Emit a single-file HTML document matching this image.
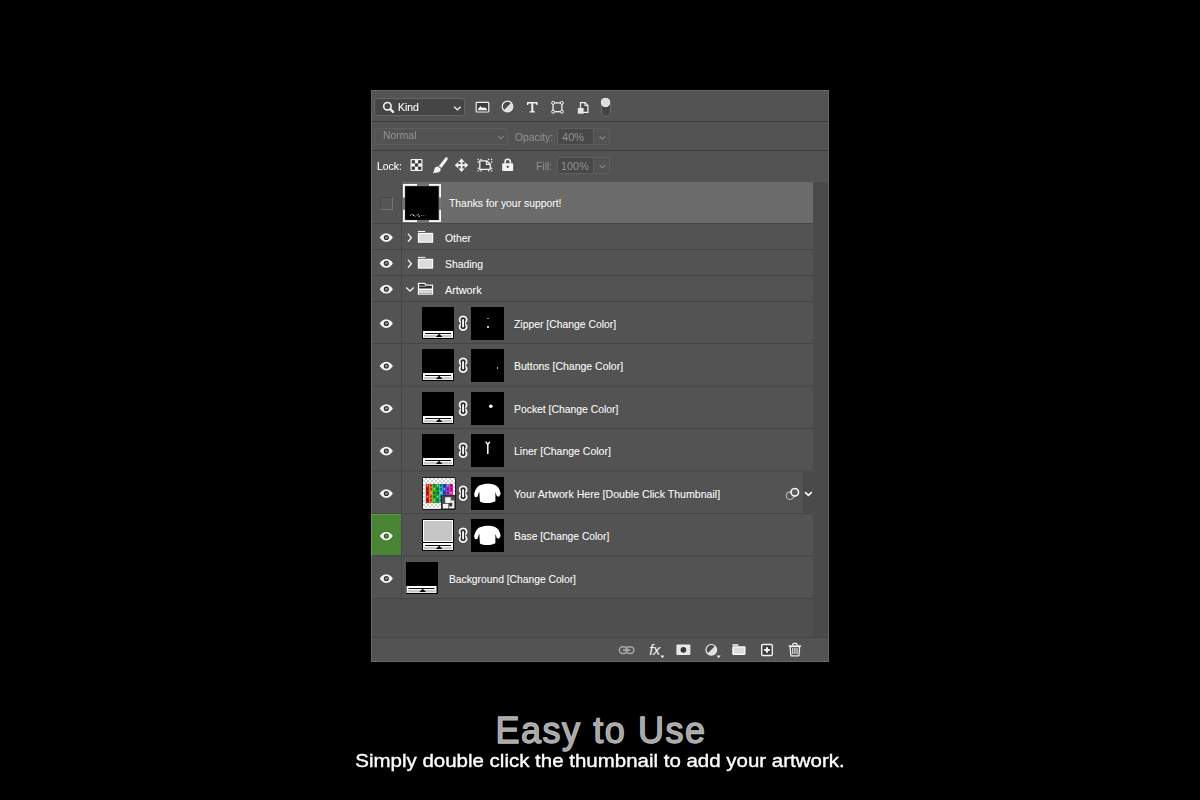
<!DOCTYPE html>
<html><head><meta charset="utf-8">
<style>
html,body{margin:0;padding:0;background:#000;}
body{width:1200px;height:800px;position:relative;overflow:hidden;font-family:"Liberation Sans",sans-serif;}
.a{position:absolute;}
#panel{left:371px;top:90px;width:458px;height:572px;background:#535353;}
.hl{position:absolute;left:372px;width:456px;height:1px;background:#3d3d3d;}
.t{position:absolute;white-space:nowrap;font-size:11.6px;line-height:14px;color:#fff;transform:scaleX(.895);transform-origin:0 50%;text-shadow:0 0 1px rgba(0,0,0,.55);-webkit-text-stroke:.15px #fff;}
.dim{color:#939393;text-shadow:none;-webkit-text-stroke:0;}
.box{position:absolute;box-sizing:border-box;border:1px solid #666;border-radius:3px;background:#454545;}
.dbox{position:absolute;box-sizing:border-box;border:1px solid #5e5e5e;border-radius:3px;background:#535353;}
.row{position:absolute;left:371px;width:442px;background:#535353;}
.rl{position:absolute;left:371px;width:442px;height:1px;background:#454545;}
svg{position:absolute;overflow:visible;}
svg.sh{filter:drop-shadow(0 0 .6px rgba(0,0,0,.75));}
#h1{position:absolute;left:1px;width:1200px;text-align:center;top:708px;font-size:36px;line-height:46px;letter-spacing:1.55px;color:#a4a4a4;-webkit-text-stroke:1.3px #b6b6b6;}
#h2{position:absolute;left:0;width:1200px;text-align:center;top:750px;font-size:18.8px;line-height:22px;color:#fff;transform:scaleX(1.09);-webkit-text-stroke:.38px #fff;}
</style></head><body>
<div id="panel" class="a"></div>
<!-- top dividers -->
<div class="hl" style="top:121px"></div>
<div class="hl" style="top:150px"></div>

<!-- row 1: filter -->
<div class="box" style="left:374px;top:98px;width:91px;height:18px;"></div>
<div class="t" style="left:397.7px;top:99.57px;">Kind</div>

<!-- row 2: blend / opacity -->
<div class="dbox" style="left:374px;top:128px;width:134px;height:17px;"></div>
<div class="t dim" style="left:382.8px;top:128.47px;">Normal</div>
<div class="t dim" style="left:515px;top:129.67px;">Opacity:</div>
<div class="dbox" style="left:557px;top:128px;width:53px;height:17px;"></div>
<div class="a" style="left:558px;top:129px;width:35px;height:15px;background:#484848;border-radius:2px 0 0 2px;"></div>
<div class="a" style="left:593px;top:129px;width:1px;height:15px;background:#5e5e5e;"></div>
<div class="t dim" style="left:561.6px;top:129.77px;transform:scaleX(.95);">40%</div>

<!-- row 3: lock / fill -->
<div class="t" style="left:376.7px;top:158.67px;">Lock:</div>
<div class="t dim" style="left:536px;top:158.77px;">Fill:</div>
<div class="dbox" style="left:557px;top:157px;width:53px;height:17px;"></div>
<div class="a" style="left:558px;top:158px;width:35px;height:15px;background:#484848;border-radius:2px 0 0 2px;"></div>
<div class="a" style="left:593px;top:158px;width:1px;height:15px;background:#5e5e5e;"></div>
<div class="t dim" style="left:561.4px;top:158.77px;transform:scaleX(.94);">100%</div>

<!-- layer list -->
<div id="list">
<div class="a" style="left:402px;top:182px;width:411px;height:41px;background:#6b6b6b;"></div>
<div class="a" style="left:371px;top:599px;width:442px;height:38px;background:#4f4f4f;"></div>
<div class="a" style="left:371px;top:514px;width:30px;height:42px;background:#5a9e3c;"></div>
<div class="a" style="left:372px;top:515px;width:29px;height:40px;background:#4a8535;"></div>
<div class="rl" style="top:223px"></div>
<div class="rl" style="top:249px"></div>
<div class="rl" style="top:275px"></div>
<div class="rl" style="top:301px"></div>
<div class="rl" style="top:343px"></div>
<div class="rl" style="top:385px;height:2px;background:#4c4c4c"></div>
<div class="rl" style="top:428px"></div>
<div class="rl" style="top:470px;height:2px;background:#4c4c4c"></div>
<div class="rl" style="top:513px"></div>
<div class="rl" style="top:555px;height:2px;background:#4c4c4c"></div>
<div class="rl" style="top:598px"></div>
<div class="a" style="left:401px;top:182px;width:1px;height:418px;background:#464646;"></div>
<div class="a" style="left:380px;top:197px;width:13px;height:13px;box-sizing:border-box;border:1px solid;border-color:#474747 #747474 #747474 #474747;background:#565656;"></div>
<svg class="sh" style="left:379px;top:233px" width="13.4" height="8.8" viewBox="0 0 13.4 8.8"><g transform="translate(0.60 0.20)"><path d="M0,4.4 C2.1,1.2 4.4,0 6.7,0 C9,0 11.3,1.2 13.4,4.4 C11.3,7.6 9,8.8 6.7,8.8 C4.4,8.8 2.1,7.6 0,4.4Z" fill="#f6f6f6"/><circle cx="6.75" cy="4.35" r="2.55" fill="#2a2a2a"/><circle cx="6.75" cy="4.35" r="1.5" fill="#7c7c7c"/><circle cx="7.1" cy="3.95" r="0.7" fill="#b0b0b0" opacity=".8"/></g></svg>
<svg class="sh" style="left:379px;top:259px" width="13.4" height="8.8" viewBox="0 0 13.4 8.8"><g transform="translate(0.60 0.00)"><path d="M0,4.4 C2.1,1.2 4.4,0 6.7,0 C9,0 11.3,1.2 13.4,4.4 C11.3,7.6 9,8.8 6.7,8.8 C4.4,8.8 2.1,7.6 0,4.4Z" fill="#f6f6f6"/><circle cx="6.75" cy="4.35" r="2.55" fill="#2a2a2a"/><circle cx="6.75" cy="4.35" r="1.5" fill="#7c7c7c"/><circle cx="7.1" cy="3.95" r="0.7" fill="#b0b0b0" opacity=".8"/></g></svg>
<svg class="sh" style="left:379px;top:284px" width="13.4" height="8.8" viewBox="0 0 13.4 8.8"><g transform="translate(0.60 0.80)"><path d="M0,4.4 C2.1,1.2 4.4,0 6.7,0 C9,0 11.3,1.2 13.4,4.4 C11.3,7.6 9,8.8 6.7,8.8 C4.4,8.8 2.1,7.6 0,4.4Z" fill="#f6f6f6"/><circle cx="6.75" cy="4.35" r="2.55" fill="#2a2a2a"/><circle cx="6.75" cy="4.35" r="1.5" fill="#7c7c7c"/><circle cx="7.1" cy="3.95" r="0.7" fill="#b0b0b0" opacity=".8"/></g></svg>
<svg class="sh" style="left:379px;top:319px" width="13.4" height="8.8" viewBox="0 0 13.4 8.8"><g transform="translate(0.60 0.20)"><path d="M0,4.4 C2.1,1.2 4.4,0 6.7,0 C9,0 11.3,1.2 13.4,4.4 C11.3,7.6 9,8.8 6.7,8.8 C4.4,8.8 2.1,7.6 0,4.4Z" fill="#f6f6f6"/><circle cx="6.75" cy="4.35" r="2.55" fill="#2a2a2a"/><circle cx="6.75" cy="4.35" r="1.5" fill="#7c7c7c"/><circle cx="7.1" cy="3.95" r="0.7" fill="#b0b0b0" opacity=".8"/></g></svg>
<svg class="sh" style="left:379px;top:361px" width="13.4" height="8.8" viewBox="0 0 13.4 8.8"><g transform="translate(0.60 0.70)"><path d="M0,4.4 C2.1,1.2 4.4,0 6.7,0 C9,0 11.3,1.2 13.4,4.4 C11.3,7.6 9,8.8 6.7,8.8 C4.4,8.8 2.1,7.6 0,4.4Z" fill="#f6f6f6"/><circle cx="6.75" cy="4.35" r="2.55" fill="#2a2a2a"/><circle cx="6.75" cy="4.35" r="1.5" fill="#7c7c7c"/><circle cx="7.1" cy="3.95" r="0.7" fill="#b0b0b0" opacity=".8"/></g></svg>
<svg class="sh" style="left:379px;top:404px" width="13.4" height="8.8" viewBox="0 0 13.4 8.8"><g transform="translate(0.60 0.20)"><path d="M0,4.4 C2.1,1.2 4.4,0 6.7,0 C9,0 11.3,1.2 13.4,4.4 C11.3,7.6 9,8.8 6.7,8.8 C4.4,8.8 2.1,7.6 0,4.4Z" fill="#f6f6f6"/><circle cx="6.75" cy="4.35" r="2.55" fill="#2a2a2a"/><circle cx="6.75" cy="4.35" r="1.5" fill="#7c7c7c"/><circle cx="7.1" cy="3.95" r="0.7" fill="#b0b0b0" opacity=".8"/></g></svg>
<svg class="sh" style="left:379px;top:446px" width="13.4" height="8.8" viewBox="0 0 13.4 8.8"><g transform="translate(0.60 0.70)"><path d="M0,4.4 C2.1,1.2 4.4,0 6.7,0 C9,0 11.3,1.2 13.4,4.4 C11.3,7.6 9,8.8 6.7,8.8 C4.4,8.8 2.1,7.6 0,4.4Z" fill="#f6f6f6"/><circle cx="6.75" cy="4.35" r="2.55" fill="#2a2a2a"/><circle cx="6.75" cy="4.35" r="1.5" fill="#7c7c7c"/><circle cx="7.1" cy="3.95" r="0.7" fill="#b0b0b0" opacity=".8"/></g></svg>
<svg class="sh" style="left:379px;top:489px" width="13.4" height="8.8" viewBox="0 0 13.4 8.8"><g transform="translate(0.60 0.20)"><path d="M0,4.4 C2.1,1.2 4.4,0 6.7,0 C9,0 11.3,1.2 13.4,4.4 C11.3,7.6 9,8.8 6.7,8.8 C4.4,8.8 2.1,7.6 0,4.4Z" fill="#f6f6f6"/><circle cx="6.75" cy="4.35" r="2.55" fill="#2a2a2a"/><circle cx="6.75" cy="4.35" r="1.5" fill="#7c7c7c"/><circle cx="7.1" cy="3.95" r="0.7" fill="#b0b0b0" opacity=".8"/></g></svg>
<svg style="left:379px;top:531px" width="13.4" height="8.8" viewBox="0 0 13.4 8.8"><g transform="translate(0.60 0.70)"><path d="M0,4.4 C2.1,1.2 4.4,0 6.7,0 C9,0 11.3,1.2 13.4,4.4 C11.3,7.6 9,8.8 6.7,8.8 C4.4,8.8 2.1,7.6 0,4.4Z" fill="#f6f6f6" stroke="#2a6a1c" stroke-width="1.3" paint-order="stroke"/><circle cx="6.75" cy="4.35" r="2.55" fill="#1f6412"/><circle cx="6.75" cy="4.35" r="1.5" fill="#4a8a35"/><circle cx="7.1" cy="3.95" r="0.7" fill="#b0b0b0" opacity=".8"/></g></svg>
<svg class="sh" style="left:379px;top:574px" width="13.4" height="8.8" viewBox="0 0 13.4 8.8"><g transform="translate(0.60 0.20)"><path d="M0,4.4 C2.1,1.2 4.4,0 6.7,0 C9,0 11.3,1.2 13.4,4.4 C11.3,7.6 9,8.8 6.7,8.8 C4.4,8.8 2.1,7.6 0,4.4Z" fill="#f6f6f6"/><circle cx="6.75" cy="4.35" r="2.55" fill="#2a2a2a"/><circle cx="6.75" cy="4.35" r="1.5" fill="#7c7c7c"/><circle cx="7.1" cy="3.95" r="0.7" fill="#b0b0b0" opacity=".8"/></g></svg>
<svg style="left:403px;top:184px" width="38" height="38" viewBox="0 0 38 38"><rect x="0.9" y="0.9" width="36.2" height="36.2" fill="none" stroke="#787878" stroke-width="1.2"/><g fill="none" stroke="#fff" stroke-width="1.7"><path d="M0.9,13.4 V0.9 H14"/><path d="M26,0.9 H37.1 V13.4"/><path d="M37.1,25.8 V37.1 H26"/><path d="M14,37.1 H0.9 V25.8"/></g><rect x="2.2" y="2.3" width="33.3" height="33.6" fill="#000"/><g fill="#d8d8d8"><rect x="7.2" y="30.6" width="1" height="1.4" opacity=".7"/><rect x="8.6" y="30" width="1.2" height="1" opacity=".9"/><rect x="10" y="30.8" width="1.4" height="1.2"/><rect x="11.8" y="31.8" width=".9" height="1" opacity=".7"/><rect x="13.6" y="30.6" width="1" height="1.2" opacity=".8"/><rect x="14.8" y="30" width="1" height="1" opacity=".8"/><rect x="15.6" y="31.6" width="1.2" height="1.4" opacity=".9"/><rect x="18" y="31" width="1" height="1" opacity=".5"/><rect x="20" y="31" width="1" height="1" opacity=".4"/><rect x="22" y="31" width="1" height="1" opacity=".3"/></g></svg>
<div class="t" style="left:448.9px;top:195px;transform:translateY(0.97px) scaleX(0.895);">Thanks for your support!</div>
<svg class="sh" style="left:407px;top:233px" width="5" height="9" viewBox="0 0 5 9"><g transform="translate(0.20 0.20)"><path d="M0.7,0.4 L4.2,4.5 L0.7,8.6" fill="none" stroke="#f6f6f6" stroke-width="1.45"/></g></svg>
<svg class="sh" style="left:417px;top:230px" width="16" height="12.6" viewBox="0 0 16 12.6"><g transform="translate(0.60 0.50)"><rect x="0.2" y="0.4" width="7.5" height="1.1" fill="#fbfbfb"/><rect x="0.8" y="2.9" width="14.2" height="8.8" fill="#dcdcdc" stroke="#fbfbfb" stroke-width="1.25"/></g></svg>
<div class="t" style="left:445.2px;top:231px;transform:translateY(0.02px) scaleX(0.895);">Other</div>
<svg class="sh" style="left:407px;top:259px" width="5" height="9" viewBox="0 0 5 9"><g transform="translate(0.20 0.20)"><path d="M0.7,0.4 L4.2,4.5 L0.7,8.6" fill="none" stroke="#f6f6f6" stroke-width="1.45"/></g></svg>
<svg class="sh" style="left:417px;top:256px" width="16" height="12.6" viewBox="0 0 16 12.6"><g transform="translate(0.60 0.40)"><rect x="0.2" y="0.4" width="7.5" height="1.1" fill="#fbfbfb"/><rect x="0.8" y="2.9" width="14.2" height="8.8" fill="#dcdcdc" stroke="#fbfbfb" stroke-width="1.25"/></g></svg>
<div class="t" style="left:445.2px;top:256px;transform:translateY(0.77px) scaleX(0.895);">Shading</div>
<svg style="left:405px;top:287px" width="8.4" height="4.6" viewBox="0 0 8.4 4.6"><g transform="translate(0.80 0.00)"><path d="M0.4,0.5 L4.2,3.9999999999999996 L8.0,0.5" fill="none" stroke="#f0f0f0" stroke-width="1.3"/></g></svg>
<svg class="sh" style="left:417px;top:282px" width="16" height="12.6" viewBox="0 0 16 12.6"><g transform="translate(0.60 0.50)"><path d="M0.85,0.85 H7.3 L8.3,2.65 H14.95 V11.6 H0.85Z" fill="#2c2c2c" stroke="#fbfbfb" stroke-width="1.3"/><path d="M0.85,3.65 H8.3" stroke="#dedede" stroke-width=".75"/><rect x="0.85" y="6" width="14.1" height="1.6" fill="#fbfbfb"/><rect x="1.5" y="7.6" width="12.8" height="3.3" fill="#dadada"/></g></svg>
<div class="t" style="left:445.2px;top:282px;transform:translateY(0.67px) scaleX(0.93);">Artwork</div>
<div class="a" style="left:422px;top:307px;width:32px;height:32px;background:#000;border-radius:0 0 1px 1px;"></div><div class="a" style="left:422px;top:307px;width:32px;height:24px;background:#000;"></div><svg style="left:423px;top:331px" width="30" height="7" viewBox="0 0 30 7"><rect x="0" y="0" width="30" height="7" fill="#fdfdfd"/><rect x="1" y="4" width="28" height="2.4" fill="#c8c8c8"/><rect x="2" y="2" width="26" height="1" fill="#0c0c0c"/><path d="M12.9,6 L16.2,2.7 L19.5,6Z" fill="#000"/></svg>
<svg style="left:458px;top:315px" width="9.1" height="15.7" viewBox="0 0 9.1 15.7"><g transform="translate(0.60 0.40)"><ellipse cx="4.5" cy="4.25" rx="3.55" ry="3.3" fill="none" stroke="#2e2e2e" stroke-width="2.9" opacity=".55"/><ellipse cx="4.5" cy="11.45" rx="3.55" ry="3.3" fill="none" stroke="#2e2e2e" stroke-width="2.9" opacity=".55"/><ellipse cx="4.5" cy="4.25" rx="3.55" ry="3.3" fill="none" stroke="#f6f6f6" stroke-width="1.9"/><ellipse cx="4.5" cy="11.45" rx="3.55" ry="3.3" fill="none" stroke="#f6f6f6" stroke-width="1.9"/><rect x="2.5" y="2.7" width="4" height="10.3" rx="2" fill="#1c1c1c"/><rect x="3.5" y="3.6" width="2" height="8.5" rx="1" fill="#f2f2f2"/></g></svg>
<div class="a" style="left:471px;top:307px;width:33px;height:33px;background:#000;"></div><div class="a" style="left:487px;top:318px;width:2px;height:1px;background:#8a8a8a;"></div><div class="a" style="left:487px;top:326px;width:2px;height:2px;background:#c8c8c8;"></div>
<div class="t" style="left:513.6px;top:317px;transform:translateY(0.12px) scaleX(0.895);">Zipper [Change Color]</div>
<div class="a" style="left:422px;top:349px;width:32px;height:32px;background:#000;border-radius:0 0 1px 1px;"></div><div class="a" style="left:422px;top:349px;width:32px;height:24px;background:#000;"></div><svg style="left:423px;top:373px" width="30" height="7" viewBox="0 0 30 7"><rect x="0" y="0" width="30" height="7" fill="#fdfdfd"/><rect x="1" y="4" width="28" height="2.4" fill="#c8c8c8"/><rect x="2" y="2" width="26" height="1" fill="#0c0c0c"/><path d="M12.9,6 L16.2,2.7 L19.5,6Z" fill="#000"/></svg>
<svg style="left:458px;top:357px" width="9.1" height="15.7" viewBox="0 0 9.1 15.7"><g transform="translate(0.60 0.40)"><ellipse cx="4.5" cy="4.25" rx="3.55" ry="3.3" fill="none" stroke="#2e2e2e" stroke-width="2.9" opacity=".55"/><ellipse cx="4.5" cy="11.45" rx="3.55" ry="3.3" fill="none" stroke="#2e2e2e" stroke-width="2.9" opacity=".55"/><ellipse cx="4.5" cy="4.25" rx="3.55" ry="3.3" fill="none" stroke="#f6f6f6" stroke-width="1.9"/><ellipse cx="4.5" cy="11.45" rx="3.55" ry="3.3" fill="none" stroke="#f6f6f6" stroke-width="1.9"/><rect x="2.5" y="2.7" width="4" height="10.3" rx="2" fill="#1c1c1c"/><rect x="3.5" y="3.6" width="2" height="8.5" rx="1" fill="#f2f2f2"/></g></svg>
<div class="a" style="left:471px;top:349px;width:33px;height:33px;background:#000;"></div><div class="a" style="left:497px;top:367px;width:1px;height:2px;background:#b0b0b0;"></div>
<div class="t" style="left:513.9px;top:359px;transform:translateY(0.07px) scaleX(0.905);">Buttons [Change Color]</div>
<div class="a" style="left:422px;top:392px;width:32px;height:32px;background:#000;border-radius:0 0 1px 1px;"></div><div class="a" style="left:422px;top:392px;width:32px;height:24px;background:#000;"></div><svg style="left:423px;top:416px" width="30" height="7" viewBox="0 0 30 7"><rect x="0" y="0" width="30" height="7" fill="#fdfdfd"/><rect x="1" y="4" width="28" height="2.4" fill="#c8c8c8"/><rect x="2" y="2" width="26" height="1" fill="#0c0c0c"/><path d="M12.9,6 L16.2,2.7 L19.5,6Z" fill="#000"/></svg>
<svg style="left:458px;top:400px" width="9.1" height="15.7" viewBox="0 0 9.1 15.7"><g transform="translate(0.60 0.40)"><ellipse cx="4.5" cy="4.25" rx="3.55" ry="3.3" fill="none" stroke="#2e2e2e" stroke-width="2.9" opacity=".55"/><ellipse cx="4.5" cy="11.45" rx="3.55" ry="3.3" fill="none" stroke="#2e2e2e" stroke-width="2.9" opacity=".55"/><ellipse cx="4.5" cy="4.25" rx="3.55" ry="3.3" fill="none" stroke="#f6f6f6" stroke-width="1.9"/><ellipse cx="4.5" cy="11.45" rx="3.55" ry="3.3" fill="none" stroke="#f6f6f6" stroke-width="1.9"/><rect x="2.5" y="2.7" width="4" height="10.3" rx="2" fill="#1c1c1c"/><rect x="3.5" y="3.6" width="2" height="8.5" rx="1" fill="#f2f2f2"/></g></svg>
<div class="a" style="left:471px;top:392px;width:33px;height:33px;background:#000;"></div><svg style="left:488px;top:404px" width="4" height="4" viewBox="0 0 4 4"><g transform="translate(0.80 0.30)"><circle cx="2" cy="2" r="1.8" fill="#fff"/></g></svg>
<div class="t" style="left:513.9px;top:401px;transform:translateY(0.67px) scaleX(0.895);">Pocket [Change Color]</div>
<div class="a" style="left:422px;top:434px;width:32px;height:32px;background:#000;border-radius:0 0 1px 1px;"></div><div class="a" style="left:422px;top:434px;width:32px;height:24px;background:#000;"></div><svg style="left:423px;top:458px" width="30" height="7" viewBox="0 0 30 7"><rect x="0" y="0" width="30" height="7" fill="#fdfdfd"/><rect x="1" y="4" width="28" height="2.4" fill="#c8c8c8"/><rect x="2" y="2" width="26" height="1" fill="#0c0c0c"/><path d="M12.9,6 L16.2,2.7 L19.5,6Z" fill="#000"/></svg>
<svg style="left:458px;top:442px" width="9.1" height="15.7" viewBox="0 0 9.1 15.7"><g transform="translate(0.60 0.40)"><ellipse cx="4.5" cy="4.25" rx="3.55" ry="3.3" fill="none" stroke="#2e2e2e" stroke-width="2.9" opacity=".55"/><ellipse cx="4.5" cy="11.45" rx="3.55" ry="3.3" fill="none" stroke="#2e2e2e" stroke-width="2.9" opacity=".55"/><ellipse cx="4.5" cy="4.25" rx="3.55" ry="3.3" fill="none" stroke="#f6f6f6" stroke-width="1.9"/><ellipse cx="4.5" cy="11.45" rx="3.55" ry="3.3" fill="none" stroke="#f6f6f6" stroke-width="1.9"/><rect x="2.5" y="2.7" width="4" height="10.3" rx="2" fill="#1c1c1c"/><rect x="3.5" y="3.6" width="2" height="8.5" rx="1" fill="#f2f2f2"/></g></svg>
<div class="a" style="left:471px;top:434px;width:33px;height:33px;background:#000;"></div><svg style="left:484px;top:441px" width="6" height="13" viewBox="0 0 6 13"><g transform="translate(0.80 0.30)"><path d="M0.2,0.4 L1.6,0.2 L3,1.9 L4.4,0.2 L5.8,0.4 L3.75,3.4 L3.75,12.8 L2.25,12.8 L2.25,3.4Z" fill="#fff"/></g></svg>
<div class="t" style="left:513.9px;top:444px;transform:translateY(0.07px) scaleX(0.905);">Liner [Change Color]</div>
<div class="a" style="left:422px;top:477px;width:34px;height:33px;background:#1e1e1e;border-radius:1.5px;"></div>
<div class="a" style="left:423px;top:478px;width:32px;height:31px;background-color:#fff;background-image:linear-gradient(45deg,#d2d2d2 25%,transparent 25%,transparent 75%,#d2d2d2 75%),linear-gradient(45deg,#d2d2d2 25%,transparent 25%,transparent 75%,#d2d2d2 75%);background-size:4px 4px;background-position:0 0,2px 2px;"></div>
<svg style="left:425px;top:484px" width="27.2" height="19" viewBox="0 0 27.2 19"><g transform="translate(0.80 0.00)"><rect x="0.00" y="0" width="3.45" height="19" fill="#d81414"/><rect x="3.39" y="0" width="3.45" height="19" fill="#cf7d14"/><rect x="6.78" y="0" width="3.45" height="19" fill="#2cae22"/><rect x="10.17" y="0" width="3.45" height="19" fill="#14a040"/><rect x="13.56" y="0" width="3.45" height="19" fill="#12aeb0"/><rect x="16.95" y="0" width="3.45" height="19" fill="#3344d0"/><rect x="20.34" y="0" width="3.45" height="19" fill="#9030c0"/><rect x="23.73" y="0" width="3.45" height="19" fill="#e012a0"/><rect x="1.00" y="0.60" width="1.4" height="1.7" fill="#e8e8e8" opacity=".7"/><rect x="1.00" y="4.30" width="1.4" height="1.7" fill="#151515" opacity=".7"/><rect x="1.00" y="8.00" width="1.4" height="1.7" fill="#151515" opacity=".7"/><rect x="1.00" y="11.70" width="1.4" height="1.7" fill="#e8e8e8" opacity=".7"/><rect x="1.00" y="15.40" width="1.4" height="1.7" fill="#151515" opacity=".7"/><rect x="4.39" y="0.60" width="1.4" height="1.7" fill="#151515" opacity=".7"/><rect x="4.39" y="4.30" width="1.4" height="1.7" fill="#151515" opacity=".7"/><rect x="4.39" y="8.00" width="1.4" height="1.7" fill="#e8e8e8" opacity=".7"/><rect x="4.39" y="11.70" width="1.4" height="1.7" fill="#151515" opacity=".7"/><rect x="4.39" y="15.40" width="1.4" height="1.7" fill="#151515" opacity=".7"/><rect x="7.78" y="0.60" width="1.4" height="1.7" fill="#151515" opacity=".7"/><rect x="7.78" y="4.30" width="1.4" height="1.7" fill="#e8e8e8" opacity=".7"/><rect x="7.78" y="8.00" width="1.4" height="1.7" fill="#151515" opacity=".7"/><rect x="7.78" y="11.70" width="1.4" height="1.7" fill="#151515" opacity=".7"/><rect x="7.78" y="15.40" width="1.4" height="1.7" fill="#e8e8e8" opacity=".7"/><rect x="11.17" y="0.60" width="1.4" height="1.7" fill="#e8e8e8" opacity=".7"/><rect x="11.17" y="4.30" width="1.4" height="1.7" fill="#151515" opacity=".7"/><rect x="11.17" y="8.00" width="1.4" height="1.7" fill="#151515" opacity=".7"/><rect x="11.17" y="11.70" width="1.4" height="1.7" fill="#e8e8e8" opacity=".7"/><rect x="11.17" y="15.40" width="1.4" height="1.7" fill="#151515" opacity=".7"/><rect x="14.56" y="0.60" width="1.4" height="1.7" fill="#151515" opacity=".7"/><rect x="14.56" y="4.30" width="1.4" height="1.7" fill="#151515" opacity=".7"/><rect x="14.56" y="8.00" width="1.4" height="1.7" fill="#e8e8e8" opacity=".7"/><rect x="14.56" y="11.70" width="1.4" height="1.7" fill="#151515" opacity=".7"/><rect x="14.56" y="15.40" width="1.4" height="1.7" fill="#151515" opacity=".7"/><rect x="17.95" y="0.60" width="1.4" height="1.7" fill="#151515" opacity=".7"/><rect x="17.95" y="4.30" width="1.4" height="1.7" fill="#e8e8e8" opacity=".7"/><rect x="17.95" y="8.00" width="1.4" height="1.7" fill="#151515" opacity=".7"/><rect x="17.95" y="11.70" width="1.4" height="1.7" fill="#151515" opacity=".7"/><rect x="17.95" y="15.40" width="1.4" height="1.7" fill="#e8e8e8" opacity=".7"/><rect x="21.34" y="0.60" width="1.4" height="1.7" fill="#e8e8e8" opacity=".7"/><rect x="21.34" y="4.30" width="1.4" height="1.7" fill="#151515" opacity=".7"/><rect x="21.34" y="8.00" width="1.4" height="1.7" fill="#151515" opacity=".7"/><rect x="21.34" y="11.70" width="1.4" height="1.7" fill="#e8e8e8" opacity=".7"/><rect x="21.34" y="15.40" width="1.4" height="1.7" fill="#151515" opacity=".7"/><rect x="24.73" y="0.60" width="1.4" height="1.7" fill="#151515" opacity=".7"/><rect x="24.73" y="4.30" width="1.4" height="1.7" fill="#151515" opacity=".7"/><rect x="24.73" y="8.00" width="1.4" height="1.7" fill="#e8e8e8" opacity=".7"/><rect x="24.73" y="11.70" width="1.4" height="1.7" fill="#151515" opacity=".7"/><rect x="24.73" y="15.40" width="1.4" height="1.7" fill="#151515" opacity=".7"/></g></svg>
<svg style="left:441px;top:495px" width="14" height="13.8" viewBox="0 0 14 13.8"><g transform="translate(0.00 0.20)"><rect width="14" height="13.8" fill="#4a4a4a"/><path d="M0.5,13.8 V0.5 H14" fill="none" stroke="#2a2a2a" stroke-width="1"/><path d="M4.2,2 H9.6 L13.2,5.6 V13 H4.2Z" fill="#f4f4f4"/><path d="M9.6,2 L13.2,5.6 H9.6Z" fill="#3a3a3a"/><path d="M9.6,2.4 V5.6 H12.8" fill="none" stroke="#dcdcdc" stroke-width=".7"/><rect x="8.2" y="7.6" width="3" height="3.6" fill="#333"/><rect x="1.2" y="7.9" width="7" height="5.6" fill="#333"/><rect x="1.8" y="8.6" width="5.6" height="4.6" fill="#f4f4f4"/></g></svg>
<svg style="left:458px;top:485px" width="9.1" height="15.7" viewBox="0 0 9.1 15.7"><g transform="translate(0.60 0.40)"><ellipse cx="4.5" cy="4.25" rx="3.55" ry="3.3" fill="none" stroke="#2e2e2e" stroke-width="2.9" opacity=".55"/><ellipse cx="4.5" cy="11.45" rx="3.55" ry="3.3" fill="none" stroke="#2e2e2e" stroke-width="2.9" opacity=".55"/><ellipse cx="4.5" cy="4.25" rx="3.55" ry="3.3" fill="none" stroke="#f6f6f6" stroke-width="1.9"/><ellipse cx="4.5" cy="11.45" rx="3.55" ry="3.3" fill="none" stroke="#f6f6f6" stroke-width="1.9"/><rect x="2.5" y="2.7" width="4" height="10.3" rx="2" fill="#1c1c1c"/><rect x="3.5" y="3.6" width="2" height="8.5" rx="1" fill="#f2f2f2"/></g></svg>
<div class="a" style="left:471px;top:477px;width:33px;height:33px;background:#000;"></div><svg style="left:471px;top:477px" width="33" height="33" viewBox="0 0 33 33"><path d="M13.4,7 C15,6.6 18.8,6.6 20.4,7 C22,7.2 23.6,7.8 24.9,8.5 C26.4,9.3 27.4,10.4 27.9,11.5 C28.6,13 29.3,14.8 29.65,16.5 C29.4,17.7 28.6,18.9 27.9,19.75 L25.65,19 C25.4,17.6 25,16.2 24.4,15 L24.4,24.25 C22,25.6 18.8,26 15.9,26 C13.4,26 10.8,25.6 8.9,24.5 L8.3,14.5 C7.6,16 7,18 6.65,19.75 L4.15,20.25 C3.6,19.2 3.2,18.2 3.15,17 C3.3,16 3.5,15.2 3.9,14.5 C4.6,12.6 5.6,10.8 6.9,9.5 C8.6,8.2 11,7.4 13.4,7Z" fill="#fff"/></svg>
<div class="t" style="left:513.5px;top:486px;transform:translateY(0.82px) scaleX(0.914);">Your Artwork Here [Double Click Thumbnail]</div>
<div class="a" style="left:803px;top:472px;width:10px;height:41px;background:#4a4a4a;"></div>
<svg class="sh" style="left:785px;top:487px" width="16" height="14" viewBox="0 0 16 14"><circle cx="5" cy="8.7" r="3.7" fill="none" stroke="#b4b4b4" stroke-width="1.4"/><circle cx="9.8" cy="5.3" r="3.8" fill="#5e5e5e" stroke="#fafafa" stroke-width="1.6"/></svg>
<svg style="left:804px;top:491px" width="7.6" height="4.4" viewBox="0 0 7.6 4.4"><g transform="translate(0.60 0.60)"><path d="M0.4,0.5 L3.8,3.8000000000000003 L7.199999999999999,0.5" fill="none" stroke="#fff" stroke-width="1.5"/></g></svg>
<div class="a" style="left:422px;top:519px;width:32px;height:32px;background:#000;border-radius:0 0 1px 1px;"></div><div class="a" style="left:423px;top:520px;width:30px;height:22px;background:#fff;"></div><div class="a" style="left:424px;top:521px;width:28px;height:20px;background:#c6c6c6;"></div><svg style="left:423px;top:543px" width="30" height="7" viewBox="0 0 30 7"><rect x="0" y="0" width="30" height="7" fill="#fdfdfd"/><rect x="1" y="4" width="28" height="2.4" fill="#c8c8c8"/><rect x="2" y="2" width="26" height="1" fill="#0c0c0c"/><path d="M12.9,6 L16.2,2.7 L19.5,6Z" fill="#000"/></svg>
<svg style="left:458px;top:527px" width="9.1" height="15.7" viewBox="0 0 9.1 15.7"><g transform="translate(0.60 0.40)"><ellipse cx="4.5" cy="4.25" rx="3.55" ry="3.3" fill="none" stroke="#2e2e2e" stroke-width="2.9" opacity=".55"/><ellipse cx="4.5" cy="11.45" rx="3.55" ry="3.3" fill="none" stroke="#2e2e2e" stroke-width="2.9" opacity=".55"/><ellipse cx="4.5" cy="4.25" rx="3.55" ry="3.3" fill="none" stroke="#f6f6f6" stroke-width="1.9"/><ellipse cx="4.5" cy="11.45" rx="3.55" ry="3.3" fill="none" stroke="#f6f6f6" stroke-width="1.9"/><rect x="2.5" y="2.7" width="4" height="10.3" rx="2" fill="#1c1c1c"/><rect x="3.5" y="3.6" width="2" height="8.5" rx="1" fill="#f2f2f2"/></g></svg>
<div class="a" style="left:471px;top:519px;width:33px;height:33px;background:#000;"></div><svg style="left:471px;top:519px" width="33" height="33" viewBox="0 0 33 33"><path d="M13.4,7 C15,6.6 18.8,6.6 20.4,7 C22,7.2 23.6,7.8 24.9,8.5 C26.4,9.3 27.4,10.4 27.9,11.5 C28.6,13 29.3,14.8 29.65,16.5 C29.4,17.7 28.6,18.9 27.9,19.75 L25.65,19 C25.4,17.6 25,16.2 24.4,15 L24.4,24.25 C22,25.6 18.8,26 15.9,26 C13.4,26 10.8,25.6 8.9,24.5 L8.3,14.5 C7.6,16 7,18 6.65,19.75 L4.15,20.25 C3.6,19.2 3.2,18.2 3.15,17 C3.3,16 3.5,15.2 3.9,14.5 C4.6,12.6 5.6,10.8 6.9,9.5 C8.6,8.2 11,7.4 13.4,7Z" fill="#fff"/></svg>
<div class="t" style="left:513.9px;top:529px;transform:translateY(0.32px) scaleX(0.885);">Base [Change Color]</div>
<div class="a" style="left:405.5px;top:562px;width:32px;height:32px;background:#000;border-radius:0 0 1px 1px;"></div><div class="a" style="left:405.5px;top:562px;width:32px;height:24px;background:#000;"></div><svg style="left:406px;top:586px" width="30" height="7" viewBox="0 0 30 7"><g transform="translate(0.50 0.00)"><rect x="0" y="0" width="30" height="7" fill="#fdfdfd"/><rect x="1" y="4" width="28" height="2.4" fill="#c8c8c8"/><rect x="2" y="2" width="26" height="1" fill="#0c0c0c"/><path d="M12.9,6 L16.2,2.7 L19.5,6Z" fill="#000"/></g></svg>
<div class="t" style="left:448.6px;top:571px;transform:translateY(0.82px) scaleX(0.887);">Background [Change Color]</div>
</div><!--endlist-->

<!-- scrollbar -->
<div class="a" style="left:813px;top:182px;width:16px;height:455px;background:#4a4a4a;"></div>
<!-- bottom bar -->
<div class="a" style="left:371px;top:637px;width:458px;height:1px;background:#454545;"></div>

<div id="icons">
<svg style="left:382px;top:101px" width="12" height="12" viewBox="0 0 12 12"><g transform="translate(0.50 0.30)"><circle cx="4.9" cy="4.9" r="3.7" fill="none" stroke="#f2f2f2" stroke-width="1.6"/><path d="M7.9,7.9 L10.6,10.6" stroke="#f2f2f2" stroke-width="2.3" stroke-linecap="round"/></g></svg>
<svg style="left:453px;top:106px" width="7.2" height="4.2" viewBox="0 0 7.2 4.2"><g transform="translate(0.80 0.30)"><path d="M0.4,0.5 L3.6,3.6 L6.8,0.5" fill="none" stroke="#f2f2f2" stroke-width="1.4"/></g></svg>
<svg style="left:475px;top:101px" width="14" height="11" viewBox="0 0 14 11"><g transform="translate(0.50 0.70)"><rect x="0.7" y="0.7" width="12.6" height="9.6" rx="0.8" fill="#3c3c3c" stroke="#f2f2f2" stroke-width="1.2"/><path d="M2.4,8.6 L2.4,7.6 L4.9,4.2 L6.6,6.4 L7.4,5.4 L8.4,6.6 L9.4,5.2 L11.6,7.8 L11.6,8.6Z" fill="#f2f2f2"/></g></svg>
<svg style="left:501px;top:100px" width="13" height="13" viewBox="0 0 13 13"><circle cx="6.5" cy="6.5" r="5.3" fill="#4a4a4a" stroke="#f2f2f2" stroke-width="1.2"/><path d="M10.25,2.75 A5.3,5.3 0 0 1 2.75,10.25Z" fill="#e0e0e0"/></svg>
<svg style="left:526px;top:102px" width="11" height="10.6" viewBox="0 0 11 10.6"><g transform="translate(0.80 0.00)"><path d="M0.2,0 H10.8 V3 H9.6 L9.2,1.4 H6.5 V9 L8.2,9.4 V10.6 H2.8 V9.4 L4.5,9 V1.4 H1.8 L1.4,3 H0.2Z" fill="#f2f2f2"/></g></svg>
<svg style="left:551px;top:101px" width="12.4" height="12" viewBox="0 0 12.4 12"><g transform="translate(0.30 0.30)"><rect x="1.8" y="1.6" width="8.8" height="8.8" fill="none" stroke="#f2f2f2" stroke-width="1.3"/><circle cx="1.8" cy="1.6" r="1.5" fill="#535353" stroke="#f2f2f2" stroke-width="1"/><circle cx="1.8" cy="10.4" r="1.5" fill="#535353" stroke="#f2f2f2" stroke-width="1"/><circle cx="10.6" cy="1.6" r="1.5" fill="#535353" stroke="#f2f2f2" stroke-width="1"/><circle cx="10.6" cy="10.4" r="1.5" fill="#535353" stroke="#f2f2f2" stroke-width="1"/></g></svg>
<svg style="left:577px;top:102px" width="11" height="12" viewBox="0 0 11 12"><g transform="translate(0.50 0.00)"><path d="M3,0.6 H7.6 L10.4,3.4 V10.4 H3Z" fill="#4a4a4a" stroke="#f2f2f2" stroke-width="1.2"/><path d="M7.4,0.6 V3.6 H10.4" fill="none" stroke="#f2f2f2" stroke-width="1"/><rect x="0.3" y="6" width="5.8" height="5.7" fill="#e6e6e6"/></g></svg>
<div class="a" style="left:601px;top:98px;width:10px;height:19px;box-sizing:border-box;border:1px solid #6c6c6c;border-radius:5px;background:#434343;"></div>
<div class="a" style="left:601.3px;top:98.2px;width:9.2px;height:9.2px;border-radius:5px;background:#dedede;box-shadow:0 0 0 .6px #fff inset;"></div>
<svg style="left:497px;top:135px" width="6.4" height="3.8" viewBox="0 0 6.4 3.8"><g transform="translate(0.60 0.60)"><path d="M0.4,0.5 L3.2,3.1999999999999997 L6.0,0.5" fill="none" stroke="#8a8a8a" stroke-width="1.1"/></g></svg>
<svg style="left:599px;top:135px" width="6.4" height="3.8" viewBox="0 0 6.4 3.8"><g transform="translate(0.20 0.80)"><path d="M0.4,0.5 L3.2,3.1999999999999997 L6.0,0.5" fill="none" stroke="#8a8a8a" stroke-width="1.1"/></g></svg>
<svg style="left:599px;top:164px" width="6.4" height="3.8" viewBox="0 0 6.4 3.8"><g transform="translate(0.20 0.60)"><path d="M0.4,0.5 L3.2,3.1999999999999997 L6.0,0.5" fill="none" stroke="#8a8a8a" stroke-width="1.1"/></g></svg>
<svg style="left:410px;top:159px" width="12" height="12" viewBox="0 0 12 12"><g transform="translate(0.50 0.00)"><rect x="0" y="0" width="12" height="12" rx="0.8" fill="#f2f2f2"/><rect x="1.2" y="1.2" width="3.2" height="3.2" fill="#3a3a3a"/><rect x="1.2" y="7.6" width="3.2" height="3.2" fill="#3a3a3a"/><rect x="4.4" y="4.4" width="3.2" height="3.2" fill="#3a3a3a"/><rect x="7.6" y="1.2" width="3.2" height="3.2" fill="#3a3a3a"/><rect x="7.6" y="7.6" width="3.2" height="3.2" fill="#3a3a3a"/></g></svg>
<svg style="left:432px;top:157px" width="15.4" height="16.6" viewBox="0 0 15.4 16.6"><g transform="translate(0.60 0.00)"><path d="M14.4,0.3 C15.4,1 15.2,2.2 14.4,3.4 L8.8,11 L6.2,8.9 L12.2,1.4 C12.9,0.5 13.7,-0.1 14.4,0.3Z" fill="#f2f2f2"/><path d="M5.5,9.6 L8.1,11.7 C8.5,13.4 7.2,15 5.2,15.5 C3.4,15.9 1.6,15.8 0.3,16.4 C1.5,14.8 1.3,13.2 2,11.6 C2.7,10 4.3,9.2 5.5,9.6Z" fill="#f2f2f2"/></g></svg>
<svg style="left:454px;top:158px" width="13.6" height="13.6" viewBox="0 0 13.6 13.6"><g transform="translate(0.70 0.40)"><path d="M6.8,0 L9.9,3.6 H7.7 V5.9 H10 V3.7 L13.6,6.8 L10,9.9 V7.7 H7.7 V10 H9.9 L6.8,13.6 L3.7,10 H5.9 V7.7 H3.6 V9.9 L0,6.8 L3.6,3.7 V5.9 H5.9 V3.6 H3.7Z" fill="#f2f2f2"/></g></svg>
<svg style="left:477px;top:158px" width="15" height="13" viewBox="0 0 15 13"><g transform="translate(0.60 0.80)"><rect x="0" y="0" width="1.3" height="1.3" fill="#f2f2f2"/><rect x="0" y="2.6" width="1.3" height="1.3" fill="#f2f2f2"/><rect x="2.8" y="0" width="1.3" height="1.3" fill="#f2f2f2"/><rect x="10.4" y="0" width="1.3" height="1.3" fill="#f2f2f2"/><rect x="13.4" y="0" width="1.3" height="1.3" fill="#f2f2f2"/><rect x="13.4" y="2.6" width="1.3" height="1.3" fill="#f2f2f2"/><rect x="0" y="8.8" width="1.3" height="1.3" fill="#f2f2f2"/><rect x="0" y="11.4" width="1.3" height="1.3" fill="#f2f2f2"/><rect x="2.8" y="11.4" width="1.3" height="1.3" fill="#f2f2f2"/><rect x="13.4" y="8.8" width="1.3" height="1.3" fill="#f2f2f2"/><rect x="13.4" y="11.4" width="1.3" height="1.3" fill="#f2f2f2"/><rect x="10.4" y="11.4" width="1.3" height="1.3" fill="#f2f2f2"/><path d="M2.2,2.1 H9.2 L12.6,5.2 V10.6 H2.2Z" fill="#484848" stroke="#f2f2f2" stroke-width="1.3"/><path d="M8.8,2.1 V5.6 H12.6" fill="none" stroke="#f2f2f2" stroke-width="1.1"/></g></svg>
<svg style="left:502px;top:158px" width="11.4" height="12.6" viewBox="0 0 11.4 12.6"><g transform="translate(0.00 0.60)"><path d="M3,5 V3.4 A2.7,2.7 0 0 1 8.4,3.4 V5" fill="none" stroke="#f2f2f2" stroke-width="1.5"/><rect x="0.2" y="4.6" width="11" height="7.8" rx="0.8" fill="#f2f2f2"/><circle cx="5.7" cy="8.2" r="1.1" fill="#3a3a3a"/></g></svg>
<svg style="left:618px;top:645px" width="16" height="8.6" viewBox="0 0 16 8.6"><g transform="translate(0.60 0.80)"><rect x="0.7" y="0.9" width="8" height="6.8" rx="3.4" fill="none" stroke="#a8a8a8" stroke-width="1.45"/><rect x="7.3" y="0.9" width="8" height="6.8" rx="3.4" fill="none" stroke="#a8a8a8" stroke-width="1.45"/><path d="M4.2,4.3 H11.8" stroke="#a8a8a8" stroke-width="1.6"/></g></svg>
<div class="a" style="left:649.3px;top:641.8px;font:italic 14.6px/16px 'Liberation Sans',sans-serif;color:#f4f4f4;letter-spacing:-.4px;">fx</div>
<svg style="left:660px;top:655px" width="4" height="2.6" viewBox="0 0 4 2.6"><g transform="translate(0.40 0.60)"><path d="M0,0 H4 L2,2.6Z" fill="#f2f2f2"/></g></svg>
<svg style="left:676px;top:644px" width="14" height="10.4" viewBox="0 0 14 10.4"><g transform="translate(0.40 0.60)"><rect x="0" y="0" width="14" height="10.4" rx="0.8" fill="#e8e8e8"/><circle cx="7" cy="5.2" r="2.9" fill="#3a3a3a"/></g></svg>
<svg style="left:704px;top:643px" width="13" height="13" viewBox="0 0 13 13"><g transform="translate(0.80 0.30)"><circle cx="6.5" cy="6.5" r="5.3" fill="#4a4a4a" stroke="#f2f2f2" stroke-width="1.2"/><path d="M10.25,2.75 A5.3,5.3 0 0 1 2.75,10.25Z" fill="#e0e0e0"/></g></svg>
<svg style="left:716px;top:655px" width="4" height="2.6" viewBox="0 0 4 2.6"><g transform="translate(0.60 0.60)"><path d="M0,0 H4 L2,2.6Z" fill="#f2f2f2"/></g></svg>
<svg style="left:732px;top:644px" width="13.4" height="10.8" viewBox="0 0 13.4 10.8"><g transform="translate(0.20 0.20)"><rect x="0.1" y="0.1" width="6.2" height="1.4" rx=".4" fill="#fbfbfb"/><rect x="0.7" y="2.7" width="12" height="7.4" rx=".5" fill="#dcdcdc" stroke="#fbfbfb" stroke-width="1.3"/></g></svg>
<svg style="left:761px;top:643px" width="12" height="12.5" viewBox="0 0 12 12.5"><g transform="translate(0.00 0.75)"><rect x="0.7" y="0.7" width="10.6" height="11.1" rx="1.2" fill="#3c3c3c" stroke="#f2f2f2" stroke-width="1.4"/><path d="M6,3.4 V9.1 M3.1,6.25 H8.9" stroke="#f2f2f2" stroke-width="2"/></g></svg>
<svg style="left:788px;top:642px" width="12.4" height="13.8" viewBox="0 0 12.4 13.8"><g transform="translate(0.70 0.70)"><path d="M0,3.3 H12.4" stroke="#f2f2f2" stroke-width="1.4"/><path d="M3.9,2.8 V2.2 Q3.9,0.6 5.4,0.6 H7 Q8.5,0.6 8.5,2.2 V2.8" fill="none" stroke="#f2f2f2" stroke-width="1.2"/><path d="M1.5,4 L2.1,12.4 Q2.2,13.2 3,13.2 H9.4 Q10.2,13.2 10.3,12.4 L10.9,4Z" fill="#3c3c3c" stroke="#f2f2f2" stroke-width="1.3"/><path d="M4.1,5.4 V11.6 M6.2,5.4 V11.6 M8.3,5.4 V11.6" stroke="#f2f2f2" stroke-width="1.15"/></g></svg>
</div><!--endicons-->
<div class="a" style="left:371px;top:90px;width:458px;height:572px;box-sizing:border-box;border:1px solid #676767;"></div>
<div class="a" style="left:371px;top:514px;width:1px;height:42px;background:#5ea440;"></div>
<div id="h1">Easy to Use</div>
<div id="h2">Simply double click the thumbnail to add your artwork.</div>
</body></html>
